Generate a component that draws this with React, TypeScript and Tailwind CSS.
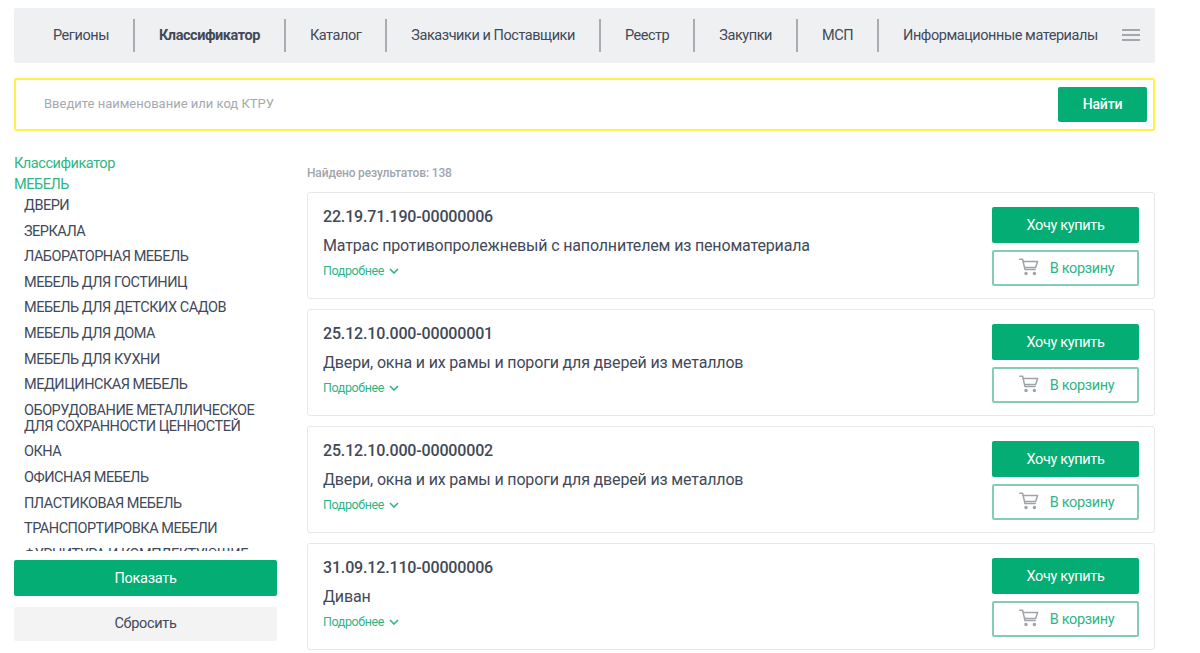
import React from "react";

const nav = [
  { t: "Регионы" },
  { t: "Классификатор", b: true },
  { t: "Каталог" },
  { t: "Заказчики и Поставщики" },
  { t: "Реестр" },
  { t: "Закупки" },
  { t: "МСП" },
  { t: "Информационные материалы", last: true },
];

const side = [
  "ДВЕРИ",
  "ЗЕРКАЛА",
  "ЛАБОРАТОРНАЯ МЕБЕЛЬ",
  "МЕБЕЛЬ ДЛЯ ГОСТИНИЦ",
  "МЕБЕЛЬ ДЛЯ ДЕТСКИХ САДОВ",
  "МЕБЕЛЬ ДЛЯ ДОМА",
  "МЕБЕЛЬ ДЛЯ КУХНИ",
  "МЕДИЦИНСКАЯ МЕБЕЛЬ",
  "ОБОРУДОВАНИЕ МЕТАЛЛИЧЕСКОЕ ДЛЯ СОХРАННОСТИ ЦЕННОСТЕЙ",
  "ОКНА",
  "ОФИСНАЯ МЕБЕЛЬ",
  "ПЛАСТИКОВАЯ МЕБЕЛЬ",
  "ТРАНСПОРТИРОВКА МЕБЕЛИ",
  "ФУРНИТУРА И КОМПЛЕКТУЮЩИЕ",
];

const cards = [
  ["22.19.71.190-00000006", "Матрас противопролежневый с наполнителем из пеноматериала"],
  ["25.12.10.000-00000001", "Двери, окна и их рамы и пороги для дверей из металлов"],
  ["25.12.10.000-00000002", "Двери, окна и их рамы и пороги для дверей из металлов"],
  ["31.09.12.110-00000006", "Диван"],
];

function Cart() {
  return (
    <svg width="20" height="18" viewBox="0 0 20 18" fill="none" stroke="#9ea3ac" strokeWidth="1.5" strokeLinejoin="round" strokeLinecap="round">
      <path d="M0.8 1.2H3.6L6 11.6H16.2" />
      <path d="M4.2 3.4H18.6L16.6 9.4H5.6" />
      <circle cx="7" cy="15.6" r="1" fill="#9ea3ac" />
      <circle cx="15.4" cy="15.6" r="1" fill="#9ea3ac" />
    </svg>
  );
}

export default function App() {
  return (
    <div className="w-[1200px] h-[653px] overflow-hidden bg-white pl-[14px] pr-[45px] pt-[8px] font-['Roboto',sans-serif] text-[#414959]">
      <nav className="h-[55px] bg-[#eff0f2] rounded-[2px] flex items-center pl-[15px] text-[14.5px] tracking-[-0.45px]">
        {nav.map((n) => (
          <div
            key={n.t}
            className={
              "h-[33px] pt-[1px] flex items-center px-6 whitespace-nowrap " +
              (n.last ? "" : "border-r-2 border-[#a9adb3] ") +
              (n.b ? "font-bold" : "")
            }
          >
            {n.t}
          </div>
        ))}
        <svg className="-mt-[2px]" width="18" height="12" viewBox="0 0 18 12" stroke="#a3a6ab" strokeWidth="2">
          <path d="M0 1H18M0 6H18M0 11H18" />
        </svg>
      </nav>

      <div className="mt-[15px] h-[53px] border-2 border-[#fff14a] rounded-[2px] flex items-center justify-between pl-[28px] pr-[6px]">
        <span className="text-[13px] leading-[16px] mb-[2px] text-[#a5a9b0]">Введите наименование или код КТРУ</span>
        <button className="w-[89px] h-[35px] bg-[#03ad73] rounded-[2px] text-white text-[14px] font-medium tracking-[-0.2px]">Найти</button>
      </div>

      <div className="flex mt-[23px]">
        <aside className="w-[263px] shrink-0 flex flex-col">
          <div className="text-[14.5px] tracking-[-0.45px] leading-[20px] text-[#2fb585]">Классификатор</div>
          <div className="text-[14.5px] tracking-[-0.45px] leading-[20px] mt-[1px] text-[#2fb585]">МЕБЕЛЬ</div>
          <ul className="h-[358px] -mt-[2px] overflow-hidden pl-[10px] text-[14.5px] tracking-[-0.49px] leading-[16px]">
            {side.map((s) => (
              <li key={s} className="py-[5px] mb-[-0.4px]">
                {s}
              </li>
            ))}
          </ul>
          <button className="mt-[9px] h-[36px] pt-[2px] bg-[#03ad73] rounded-[2px] text-white text-[14.5px] tracking-[-0.3px]">Показать</button>
          <button className="mt-[11px] h-[34px] bg-[#f3f3f4] rounded-[2px] text-[14.5px] tracking-[-0.3px]">Сбросить</button>
        </aside>

        <main className="ml-[30px] flex-1 min-w-0">
          <div className="text-[12px] font-medium text-[#a1a6ad] leading-[16px] mt-[11px] tracking-[-0.15px]">Найдено результатов: 138</div>
          <div className="mt-[11px] flex flex-col gap-[10px]">
            {cards.map(([code, title], i) => (
              <div key={i} className="h-[107px] border border-[#e6e7ea] rounded-[3px] flex justify-between pl-[15px] pr-[15px] pt-[14px]">
                <div>
                  <div className="text-[16px] font-medium leading-[20px] tracking-[-0.16px]">{code}</div>
                  <div className="text-[16px] leading-[20px] mt-[9px] tracking-[-0.16px]">{title}</div>
                  <div className="flex items-center gap-[5px] text-[12.5px] tracking-[-0.4px] leading-[16px] mt-[7px] text-[#2fb585]">
                    Подробнее
                    <svg width="10" height="6" viewBox="0 0 10 6" fill="none" stroke="#2fb585" strokeWidth="1.6">
                      <path d="M1 1L5 5L9 1" />
                    </svg>
                  </div>
                </div>
                <div className="w-[147px] flex flex-col gap-[7px]">
                  <button className="h-[36px] pt-[1px] bg-[#03ad73] rounded-[2px] text-white text-[14.5px] tracking-[-0.35px]">Хочу купить</button>
                  <button className="h-[36px] pt-[1px] border-2 border-[#84cdb4] rounded-[2px] text-[#2fb585] text-[14.5px] tracking-[-0.35px] flex items-center justify-center gap-[11px] pl-[2px]">
                    <span className="-mt-[4px]"><Cart /></span>
                    В корзину
                  </button>
                </div>
              </div>
            ))}
          </div>
        </main>
      </div>
    </div>
  );
}
